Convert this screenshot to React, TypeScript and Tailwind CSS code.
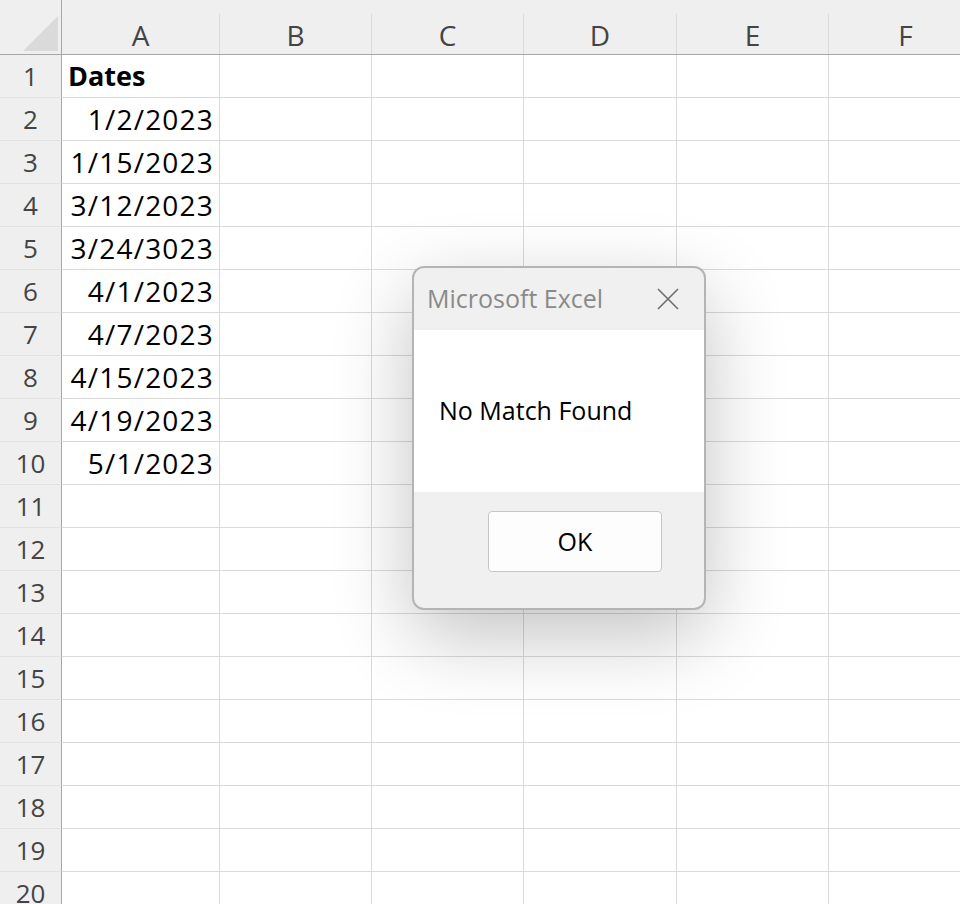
import React from "react";

const cols = [
  { name: "A", w: "w-[158px]" },
  { name: "B", w: "w-[152px]" },
  { name: "C", w: "w-[152px]" },
  { name: "D", w: "w-[153px]" },
  { name: "E", w: "w-[152px]" },
  { name: "F", w: "w-[154px]" },
];

const dates = [
  "1/2/2023",
  "1/15/2023",
  "3/12/2023",
  "3/24/3023",
  "4/1/2023",
  "4/7/2023",
  "4/15/2023",
  "4/19/2023",
  "5/1/2023",
];

const rows = Array.from({ length: 20 }, (_, i) => i + 1);

export default function App() {
  return (
    <div className="relative h-[904px] w-[960px] overflow-hidden bg-white font-['Open_Sans','Noto_Sans',sans-serif]">
      {/* column headers */}
      <div className="flex h-[55px] w-max border-b border-[#a6a6a6] bg-[#efefef]">
        <div className="w-[62px] shrink-0 border-r border-[#a6a6a6]">
          <svg width="61" height="54" viewBox="0 0 61 54">
            <polygon points="23,51 58,51 58,16" fill="#dadada" />
          </svg>
        </div>
        {cols.map((c) => (
          <div key={c.name} className={`${c.w} shrink-0 pt-[14px]`}>
            <div className="flex h-full items-center justify-center border-r border-[#dadada] pt-[1px] text-[28px] text-[#444]">
              {c.name}
            </div>
          </div>
        ))}
      </div>

      {/* rows */}
      {rows.map((r) => (
        <div key={r} className="flex h-[43px] w-max">
          <div className="flex w-[62px] shrink-0 items-center justify-center border-r border-b border-r-[#a6a6a6] border-b-[#e2e2e2] bg-[#efefef] text-[26px] text-[#444]">
            {r}
          </div>
          {cols.map((c) => {
            let content: React.ReactNode = null;
            let align = "justify-end pr-[6px]";
            if (c.name === "A" && r === 1) {
              content = <span className="text-[27px] font-bold">Dates</span>;
              align = "justify-start pl-[6px]";
            } else if (c.name === "A" && r >= 2 && r <= 10) {
              content = <span className="tracking-[1.2px]">{dates[r - 2]}</span>;
              align = "justify-end pr-[5px]";
            }
            return (
              <div
                key={c.name}
                className={`${c.w} flex shrink-0 items-center ${align} border-r border-b border-[#dadada] text-[28px] text-black`}
              >
                {content}
              </div>
            );
          })}
        </div>
      ))}

      {/* message box */}
      <div className="absolute left-[412px] top-[266px] flex h-[344px] w-[294px] flex-col overflow-hidden rounded-[12px] border-2 border-[#b4b4b4] bg-[#f0f0f0] shadow-[0_26px_80px_rgba(0,0,0,0.24)]">
        <div className="flex h-[62px] items-center justify-between pl-[13px] pr-[24px]">
          <span className="text-[25px] text-[#8a8a8a]">Microsoft Excel</span>
          <svg width="24" height="24" viewBox="0 0 24 24">
            <path d="M2 2 L22 22 M22 2 L2 22" stroke="#6e6e6e" strokeWidth="1.6" />
          </svg>
        </div>
        <div className="flex h-[162px] items-center bg-white pl-[25px] text-[25px] text-black">
          No Match Found
        </div>
        <div className="flex flex-1 items-start justify-start pl-[74px] pt-[19px]">
          <div className="flex h-[61px] w-[174px] items-center justify-center rounded-[4px] border border-[#c6c6c6] bg-[#fdfdfd] text-[25px] text-black">
            OK
          </div>
        </div>
      </div>
    </div>
  );
}
